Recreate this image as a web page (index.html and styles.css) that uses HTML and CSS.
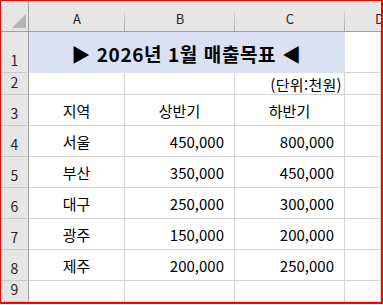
FILE: index.html
```html
<!DOCTYPE html>
<html lang="ko">
<head>
<meta charset="utf-8">
<link rel="stylesheet" href="styles.css">
</head>
<body>
<div class="sheet">
  <div class="corner"><svg class="tri" width="14" height="14" viewBox="0 0 14 14"><polygon points="0,14 14,14 14,0" fill="#b5b5b5"/></svg></div>
  <div class="colhdr">A</div>
  <div class="colhdr">B</div>
  <div class="colhdr">C</div>
  <div class="colhdr last"><span class="dlabel">D</span></div>

  <div class="rowhdr">1</div>
  <div class="cell title">▶ 2026년 1월 매출목표 ◀</div>
  <div class="cell"></div>

  <div class="rowhdr">2</div>
  <div class="cell"></div>
  <div class="cell"></div>
  <div class="cell unit">(단위:천원)</div>
  <div class="cell"></div>

  <div class="rowhdr">3</div>
  <div class="cell center">지역</div>
  <div class="cell center">상반기</div>
  <div class="cell center">하반기</div>
  <div class="cell"></div>

  <div class="rowhdr">4</div>
  <div class="cell center">서울</div>
  <div class="cell num">450,000</div>
  <div class="cell num">800,000</div>
  <div class="cell"></div>

  <div class="rowhdr">5</div>
  <div class="cell center">부산</div>
  <div class="cell num">350,000</div>
  <div class="cell num">450,000</div>
  <div class="cell"></div>

  <div class="rowhdr">6</div>
  <div class="cell center">대구</div>
  <div class="cell num">250,000</div>
  <div class="cell num">300,000</div>
  <div class="cell"></div>

  <div class="rowhdr">7</div>
  <div class="cell center">광주</div>
  <div class="cell num">150,000</div>
  <div class="cell num">200,000</div>
  <div class="cell"></div>

  <div class="rowhdr">8</div>
  <div class="cell center">제주</div>
  <div class="cell num">200,000</div>
  <div class="cell num">250,000</div>
  <div class="cell"></div>

  <div class="rowhdr">9</div>
  <div class="cell"></div>
  <div class="cell"></div>
  <div class="cell"></div>
  <div class="cell"></div>
</div>
</body>
</html>
```

FILE: styles.css
```css
html, body {
  margin: 0;
  padding: 0;
  background: #ffffff;
}

body {
  font-family: "Noto Sans CJK KR", "Noto Sans", sans-serif;
  color: #000;
}

.sheet {
  display: grid;
  grid-template-columns: 28px 96px 110px 110px 36px;
  grid-template-rows: 31px 41px 22px repeat(6, 31px) 21px;
  width: 380px;
  border-style: solid;
  border-color: #ff0000;
  border-width: 1px 2px 2px 1px;
  overflow: hidden;
}

.corner {
  background: #e6e6e6;
  border-right: 1px solid #9e9e9e;
  border-bottom: 1px solid #9e9e9e;
  display: flex;
  justify-content: flex-end;
  align-items: flex-end;
  padding: 0 2px 3px 0;
}

.tri {
  display: block;
}

.colhdr {
  background: #e6e6e6 linear-gradient(#dcdcdc, #ababab) right bottom / 1px 21px no-repeat;
  border-bottom: 1px solid #9e9e9e;
  display: flex;
  justify-content: center;
  align-items: flex-end;
  padding-bottom: 4px;
  font-size: 13px;
  line-height: 16px;
  color: #262626;
}

.colhdr.last {
  background-image: none;
  display: block;
  padding-top: 10px;
  padding-bottom: 0;
  overflow: hidden;
}

.dlabel {
  display: block;
  margin-left: 30px;
  width: 20px;
}

.rowhdr {
  background: #e6e6e6;
  border-right: 1px solid #9e9e9e;
  border-bottom: 1px solid #c8c8c8;
  display: flex;
  justify-content: center;
  align-items: flex-end;
  padding-bottom: 3px;
  font-size: 14px;
  line-height: 18px;
  color: #262626;
}

.cell {
  border-right: 1px solid #d4d4d4;
  border-bottom: 1px solid #d4d4d4;
  display: flex;
  align-items: center;
  font-size: 15px;
  line-height: 20px;
  padding-top: 1px;
  white-space: nowrap;
}

.title {
  grid-column: span 3;
  background: #d9e1f2;
  border-color: #d9e1f2;
  justify-content: center;
  font-size: 19px;
  font-weight: bold;
  letter-spacing: 0.6px;
  padding-top: 4px;
}

.center {
  justify-content: center;
}

.num {
  justify-content: flex-end;
  padding-right: 10px;
}

.unit {
  justify-content: flex-end;
  padding-right: 2px;
  padding-top: 3px;
  letter-spacing: 0.3px;
}
```
